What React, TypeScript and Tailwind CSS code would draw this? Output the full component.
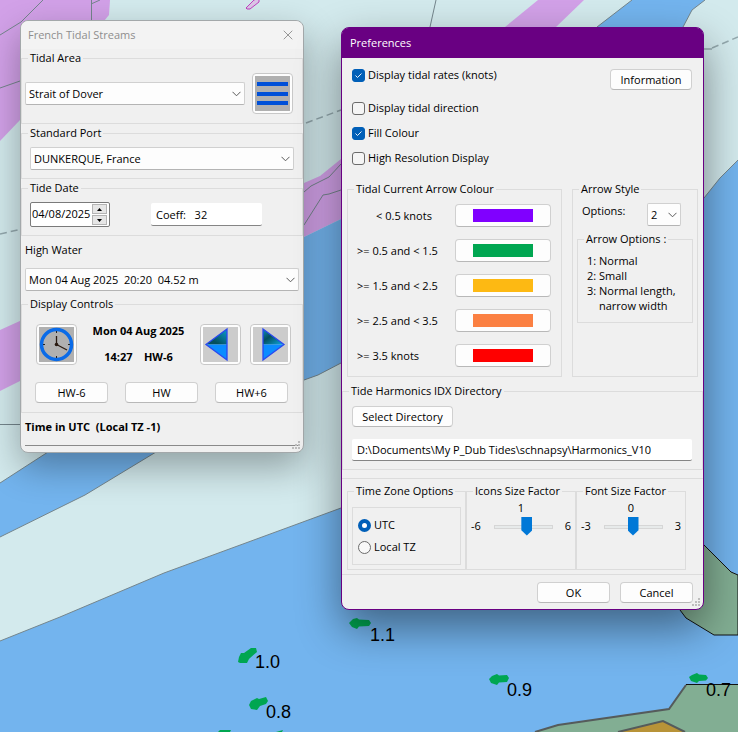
import { useState } from "react";
import type { ReactNode } from "react";
import { X } from "lucide-react";

function Group({ title, className = "", children }: { title: string; className?: string; children: ReactNode }) {
  return (
    <fieldset className={`min-w-0 border border-[#dcdcdc] ${className}`}>
      <legend className="ml-[6px] px-[2px] leading-[18px] whitespace-pre">{title}</legend>
      {children}
    </fieldset>
  );
}

function Picker({ label, options, className = "" }: { label: string; options: string[]; className?: string }) {
  return (
    <div className={`relative h-[23px] ${className}`}>
      <select
        aria-label={label}
        className="h-full w-full appearance-none rounded-[2px] border border-[#d0d0d0] border-b-[#b4b4b4] bg-[#fdfdfd] pl-[3px] leading-[18px] outline-none"
      >
        {options.map((o) => (
          <option key={o}>{o}</option>
        ))}
      </select>
      <svg className="pointer-events-none absolute top-[9px] right-[4px]" width="9" height="6" fill="none" stroke="#5a5a5a" aria-hidden="true">
        <path d="M0.500 0.800L4.500 4.800L8.500 0.800" />
      </svg>
    </div>
  );
}

function Push({ className = "", children }: { className?: string; children: ReactNode }) {
  return (
    <button
      type="button"
      className={`h-[21px] rounded-[4px] border border-[#d0d0d0] border-b-[#b8b8b8] bg-[#fdfdfd] leading-[18px] whitespace-nowrap ${className}`}
    >
      {children}
    </button>
  );
}

function IconButton({ label, shade, children }: { label: string; shade: string; children: ReactNode }) {
  return (
    <button
      type="button"
      aria-label={label}
      className="flex size-[41px] shrink-0 items-center justify-center rounded-[4px] border border-[#c8c8c8] bg-[#fdfdfd]"
    >
      <span className={`block size-[35px] ${shade}`}>{children}</span>
    </button>
  );
}

function Tick({ label, on = false }: { label: string; on?: boolean }) {
  return (
    <label className="flex h-[18px] items-center gap-[3px]">
      <span className="relative size-[13px]">
        <input
          type="checkbox"
          defaultChecked={on}
          className="peer block size-[13px] appearance-none rounded-[3px] border border-[#6b6b6b] bg-[#f5f5f5] checked:border-[#005fb8] checked:bg-[#005fb8]"
        />
        <svg className="pointer-events-none absolute inset-0 hidden peer-checked:block" width="13" height="13" fill="none" stroke="#e8f1fa" aria-hidden="true">
          <path d="M3.500 6.500L5.500 8.500L9.500 4.500" />
        </svg>
      </span>
      {label}
    </label>
  );
}

function Radio({ label, on = false }: { label: string; on?: boolean }) {
  return (
    <label className="flex h-[22px] items-center gap-[3px]">
      <input
        type="radio"
        name="zone"
        defaultChecked={on}
        className="block size-[13px] appearance-none rounded-full border border-[#6b6b6b] bg-[#f8f8f8] checked:border-4 checked:border-[#005fb8] checked:bg-white"
      />
      {label}
    </label>
  );
}

function Factor({ title, limit, start }: { title: string; limit: number; start: number }) {
  const [value, setValue] = useState(start);
  return (
    <Group title={title} className="w-[110px]">
      <output className="block text-center leading-[16px]">{value}</output>
      <div className="flex items-center justify-between pt-[1px] pr-[4px] pl-[4px]">
        <span className="w-[14px]">-{limit}</span>
        <input
          type="range"
          aria-label={title}
          min={-limit}
          max={limit}
          value={value}
          onChange={(e) => setValue(Number(e.target.value))}
          className="h-[19px] w-[59px] appearance-none bg-transparent [&::-webkit-slider-runnable-track]:h-[4px] [&::-webkit-slider-runnable-track]:border [&::-webkit-slider-runnable-track]:border-[#d6d6d6] [&::-webkit-slider-runnable-track]:bg-[#e7eaea] [&::-webkit-slider-thumb]:-mt-[9px] [&::-webkit-slider-thumb]:h-[19px] [&::-webkit-slider-thumb]:w-[11px] [&::-webkit-slider-thumb]:appearance-none [&::-webkit-slider-thumb]:bg-[#0078d7] [&::-webkit-slider-thumb]:[clip-path:polygon(0_0,100%_0,100%_72%,50%_100%,0_72%)]"
        />
        <span className="w-[10px] text-right">{limit}</span>
      </div>
    </Group>
  );
}

function Grip() {
  return (
    <svg className="absolute right-[2px] bottom-[2px]" width="9" height="9" fill="#bdbdbd" aria-hidden="true">
      <path d="M6 0h2v2h-2zM3 3h2v2h-2zM6 3h2v2h-2zM0 6h2v2h-2zM3 6h2v2h-2zM6 6h2v2h-2z" />
    </svg>
  );
}

const rates = [
  { x: 255, y: 668, text: "1.0" },
  { x: 266, y: 718, text: "0.8" },
  { x: 370, y: 641, text: "1.1" },
  { x: 507, y: 696, text: "0.9" },
  { x: 706, y: 696, text: "0.7" },
];

function Chart() {
  return (
    <svg className="absolute inset-0 h-full w-full" viewBox="0 0 738 732" preserveAspectRatio="xMinYMin slice" aria-label="Tidal chart">
      <rect width="738" height="732" fill="#d3eaed" />
      <g fill="#d2a1e8">
        <path d="M0 0H110L109 15L104 21L20 120L0 141Z" />
        <path d="M0 330L150 262L304 183L320 176L341 159L400 110V190L341 219L304 237L20 381L0 391Z" />
        <path d="M538 0H584L556 27L500 70H455L505 27Z" />
      </g>
      <g fill="#73b4ee">
        <path d="M304 237L341 219L400 190V340L341 363L318 375L304 380L270 400H200V280Z" />
        <path d="M632 0H705L692 10L683 27L670 60H560L597 27Z" />
        <path d="M738 160L720 178L704 198L640 260L500 440L341 508L164 573L60 617L0 641V732H738Z" />
        <path d="M0 483L48 452L100 420H200L156 452L85 495L0 537Z" />
      </g>
      <g fill="none" stroke="#74858c" strokeWidth="1">
        <path d="M43 0L21 22L0 35M91.500 0V22M91 4L100 0M0 88L20 81M0 424.500H21" />
        <path d="M436 0L430 27M304 192L311 186L329 177L341 164M304 225L323 195L329 194L341 190" />
        <path d="M0 483L48 452M0 537L85 495L156 452M0 641L60 617L164 573L341 508" />
        <path d="M304 380L318 375L341 363M632 0L597 27M705 0L692 10L683 27M704 198L720 178L738 160" />
      </g>
      <g fill="none" stroke="#93a8ad" strokeWidth="1.500">
        <path d="M306 123L341 110M712 48L738 37M0 234L22 229" strokeDasharray="7 4" />
        <path d="M704 49H712" />
      </g>
      <path d="M246 8L254 0L259 -2L259 2L250 9L247 9Z" fill="#dcc6e8" stroke="#c040c0" />
      <path d="M690 530L704 545L719 560L731 572L738 575V635H714L686 618L680 610L670 595Z" fill="#82ae93" stroke="#111" />
      <path d="M535 732L558 725L669 709L686 685H738V732Z" fill="#82ae93" />
      <path d="M618 732L663 721L685 732Z" fill="#b89338" />
      <path d="M535 732L558 725L669 709L686 685M618 732L663 721L685 732" fill="none" stroke="#555b5b" strokeWidth="2" />
      <path d="M686 684.500H738" stroke="#111" />
      <g fill="#00a651">
        <path d="M238 662L239 657L241 653H244L251 648L256 648L257 652L250 658L249 659L247 663L240 663Z" />
        <path d="M249 705L251 701L257 698L259 699L266 697L268 701L266 704L260 706L257 710L251 709Z" />
        <path d="M349 623L353 619L357 618L359 619.500L369 620L371 623L369 626L359 626.500L357 629L352 627Z" />
        <path d="M489 679L492 676L497 674L499 675.500L507 675L509 678L507 682L499 682.500L497 685L491 683Z" />
        <path d="M689 677L692 675L697 673L699 674.500L706 675L708 678L706 680.500L699 681L697 683L691 681Z" />
        <path d="M218 732L220 730H231L230 732ZM276 732L283 730L282 732Z" />
      </g>
      <g className="text-[18px]" fontFamily="Liberation Sans, Arial, sans-serif" fill="#000">
        {rates.map((r) => (
          <text key={r.text} x={r.x} y={r.y}>
            {r.text}
          </text>
        ))}
      </g>
    </svg>
  );
}

function StreamsWindow() {
  return (
    <section className="absolute top-[20px] left-[20px] w-[284px] rounded-[8px] border border-[#a3a8aa] bg-[#f0f0f0] shadow-[0_14px_36px_rgba(0,0,0,0.32)]">
      <header className="flex h-[28px] items-center justify-between rounded-t-[8px] bg-[#f3f3f3] pr-[7px] pl-[7px] text-[#8e8e8e]">
        <h1>French Tidal Streams</h1>
        <button type="button" aria-label="Close">
          <X size={16} strokeWidth={1} className="text-[#666]" />
        </button>
      </header>

      <Group title="Tidal Area">
        <div className="flex items-center gap-[7px] pt-[6px] pr-[9px] pb-[9px] pl-[3px]">
          <Picker label="Tidal Area" options={["Strait of Dover"]} className="flex-1" />
          <IconButton label="Tidal area list" shade="bg-[#b0b0b0]">
            <svg viewBox="0 0 35 35" fill="#0050d8">
              <path d="M2 6h31v4H2zM2 16h31v4H2zM2 25h31v4H2z" />
            </svg>
          </IconButton>
        </div>
      </Group>

      <Group title="Standard Port">
        <div className="px-[8px] pt-[5px] pb-[8px]">
          <Picker label="Standard Port" options={["DUNKERQUE, France"]} />
        </div>
      </Group>

      <Group title="Tide Date">
        <div className="flex items-center gap-[41px] px-[8px] pt-[5px] pb-[8px]">
          <div className="flex h-[25px] w-[80px] items-center rounded-[2px] border border-[#7a7a7a] bg-white pr-[2px]">
            <input aria-label="Tide Date" defaultValue="04/08/2025" className="w-[61px] min-w-0 pl-[1px] outline-none" />
            <span className="flex flex-col gap-[1px]">
              <button type="button" aria-label="Next day" className="flex h-[10px] w-[15px] items-center justify-center border border-[#b4b4b4] bg-[#e6e6e6]">
                <svg width="5" height="3"><path d="M0 3L2.500 0L5 3Z" /></svg>
              </button>
              <button type="button" aria-label="Previous day" className="flex h-[10px] w-[15px] items-center justify-center border border-[#b4b4b4] bg-[#e6e6e6]">
                <svg width="5" height="3"><path d="M0 0L2.500 3L5 0Z" /></svg>
              </button>
            </span>
          </div>
          <input
            aria-label="Coefficient"
            defaultValue="Coeff:   32"
            className="h-[23px] w-[111px] rounded-[2px] border-b border-[#858585] bg-white px-[5px] outline-none"
          />
        </div>
      </Group>

      <div className="px-[4px] pt-[5px] pb-[4px]">
        <p className="mb-[9px] leading-[18px]">High Water</p>
        <Picker label="High Water" options={["Mon 04 Aug 2025\u00a0 20:20\u00a0 04.52 m"]} />
      </div>

      <Group title="Display Controls">
        <div className="flex items-center pt-[9px] pr-[11px] pl-[14px]">
          <IconButton label="Current time" shade="bg-[#b0b0b0]">
            <svg viewBox="0 0 35 35" fill="none">
              <circle cx="17.500" cy="17.500" r="15" stroke="#0a6be8" strokeWidth="3.500" />
              <path d="M17.500 17.500V9M17.500 17.500L28 23" stroke="#2a1a10" strokeWidth="1.300" />
              <path d="M17.500 4V6M17.500 29V31M4 17.500H6M29 17.500H31" stroke="#222" />
              <circle cx="17.500" cy="17.500" r="1.800" fill="#2a1a10" />
            </svg>
          </IconButton>
          <div className="flex flex-1 flex-col items-center gap-[8px] font-bold leading-[18px] whitespace-pre">
            <span>Mon 04 Aug 2025</span>
            <span>{"14:27    HW-6"}</span>
          </div>
          <div className="flex gap-[9px]">
            <IconButton label="Step back" shade="bg-[#cccccc]">
              <svg viewBox="0 0 35 35">
                <defs>
                  <linearGradient id="dusk" x1="0" y1="1" x2="1" y2="0">
                    <stop offset="0.300" stopColor="#04505e" />
                    <stop offset="1" stopColor="#0a9cd0" />
                  </linearGradient>
                </defs>
                <path d="M24 2V17.500H3Z" fill="url(#dusk)" />
                <path d="M3 17.500H24V33Z" fill="#0a8cff" />
                <path d="M24 2V33L3 17.500Z" fill="none" stroke="#2a48f0" strokeWidth="1.300" />
              </svg>
            </IconButton>
            <IconButton label="Step forward" shade="bg-[#cccccc]">
              <svg viewBox="0 0 35 35">
                <defs>
                  <linearGradient id="dawn" x1="0" y1="0" x2="1" y2="1">
                    <stop offset="0.100" stopColor="#0a80a8" />
                    <stop offset="0.400" stopColor="#04505e" />
                    <stop offset="0.900" stopColor="#0a9cd0" />
                  </linearGradient>
                </defs>
                <path d="M10 2V17.500H31Z" fill="url(#dawn)" />
                <path d="M31 17.500H10V33Z" fill="#0a8cff" />
                <path d="M10 2V33L31 17.500Z" fill="none" stroke="#2a48f0" strokeWidth="1.300" />
              </svg>
            </IconButton>
          </div>
        </div>
        <div className="flex justify-between pt-[16px] pr-[14px] pb-[9px] pl-[13px]">
          <Push className="w-[73px]">HW-6</Push>
          <Push className="w-[73px]">HW</Push>
          <Push className="w-[73px]">HW+6</Push>
        </div>
      </Group>

      <footer className="px-[4px] pt-[5px] pb-[6px]">
        <p className="border-b border-[#8a8a8a] pb-[9px] font-bold leading-[18px] whitespace-pre">{"Time in UTC  (Local TZ -1)"}</p>
      </footer>
      <Grip />
    </section>
  );
}

const bands = [
  { label: "< 0.5 knots", fill: "bg-[#8000ff]", align: "text-center" },
  { label: ">= 0.5 and < 1.5", fill: "bg-[#00a651]", align: "" },
  { label: ">= 1.5 and < 2.5", fill: "bg-[#fdb913]", align: "" },
  { label: ">= 2.5 and < 3.5", fill: "bg-[#fb8042]", align: "" },
  { label: ">= 3.5 knots", fill: "bg-[#ff0000]", align: "" },
];

function PreferencesWindow() {
  return (
    <section className="absolute top-[27px] left-[341px] w-[363px] overflow-visible rounded-[8px] border border-[#690082] bg-[#f0f0f0] shadow-[0_18px_44px_rgba(0,0,0,0.45)]">
      <header className="flex h-[30px] items-center rounded-t-[6px] bg-[#690082] pl-[8px] text-white">
        <h2>Preferences</h2>
      </header>

      <div className="flex items-start justify-between pt-[8px] pr-[11px] pl-[10px]">
        <div className="flex flex-col gap-[7px]">
          <div className="mb-[8px]">
            <Tick label="Display tidal rates (knots)" on />
          </div>
          <Tick label="Display tidal direction" />
          <Tick label="Fill Colour" on />
          <Tick label="High Resolution Display" />
        </div>
        <Push className="mt-[3px] w-[82px]">Information</Push>
      </div>

      <div className="flex gap-[10px] px-[5px] pt-[13px]">
        <Group title="Tidal Current Arrow Colour" className="flex-1">
          <div className="flex flex-col gap-[12px] pt-[6px] pr-[10px] pb-[9px] pl-[9px]">
            {bands.map((b) => (
              <div key={b.label} className="flex items-center justify-between">
                <span className={`w-[94px] leading-[18px] whitespace-nowrap ${b.align}`}>{b.label}</span>
                <button
                  type="button"
                  aria-label={`Colour for ${b.label}`}
                  className="flex h-[23px] w-[96px] items-center justify-center rounded-[4px] border border-[#d0d0d0] border-b-[#b8b8b8] bg-[#fdfdfd]"
                >
                  <span className={`h-[13px] w-[60px] ${b.fill}`} />
                </button>
              </div>
            ))}
          </div>
        </Group>
        <Group title="Arrow Style" className="w-[126px]">
          <div className="flex items-start justify-between pt-[5px] pr-[16px] pl-[9px]">
            <span className="leading-[16px]">Options:</span>
            <Picker label="Options" options={["2", "1", "3"]} className="w-[34px]" />
          </div>
          <div className="px-[4px] pt-[4px]">
            <Group title="Arrow Options :">
              <ol className="pt-[5px] pb-[9px] pl-[9px] leading-[15px] whitespace-nowrap">
                <li>1: Normal</li>
                <li>2: Small</li>
                <li>3: Normal length,</li>
                <li className="pl-[12px]">narrow width</li>
              </ol>
            </Group>
          </div>
        </Group>
      </div>

      <div className="pt-[5px]">
        <Group title="Tide Harmonics IDX Directory">
          <div className="flex flex-col items-start gap-[12px] pt-[6px] pr-[10px] pb-[8px] pl-[9px]">
            <Push className="w-[101px]">Select Directory</Push>
            <input
              aria-label="Tide Harmonics IDX Directory"
              defaultValue="D:\Documents\My P_Dub Tides\schnapsy\Harmonics_V10"
              className="h-[22px] w-full rounded-[2px] border-b border-[#858585] bg-white px-[5px] outline-none"
            />
          </div>
        </Group>
      </div>

      <div className="mt-[8px] flex border-y border-[#dcdcdc] px-[5px] pt-[3px] pb-[4px]">
        <Group title="Time Zone Options" className="w-[119px]">
          <div className="mx-[4px] mt-[7px] mb-[4px] border border-[#dcdcdc] pt-[6px] pb-[6px] pl-[5px]">
            <Radio label="UTC" on />
            <Radio label="Local TZ" />
          </div>
        </Group>
        <Factor title="Icons Size Factor" limit={6} start={1} />
        <Factor title="Font Size Factor" limit={3} start={0} />
      </div>

      <footer className="flex justify-end gap-[10px] pt-[7px] pr-[10px] pb-[6px]">
        <Push className="w-[73px]">OK</Push>
        <Push className="w-[73px]">Cancel</Push>
      </footer>
      <Grip />
    </section>
  );
}

export default function App() {
  return (
    <main className="relative min-h-screen overflow-hidden font-['Open_Sans',sans-serif] text-[11px] text-black">
      <Chart />
      <StreamsWindow />
      <PreferencesWindow />
    </main>
  );
}
